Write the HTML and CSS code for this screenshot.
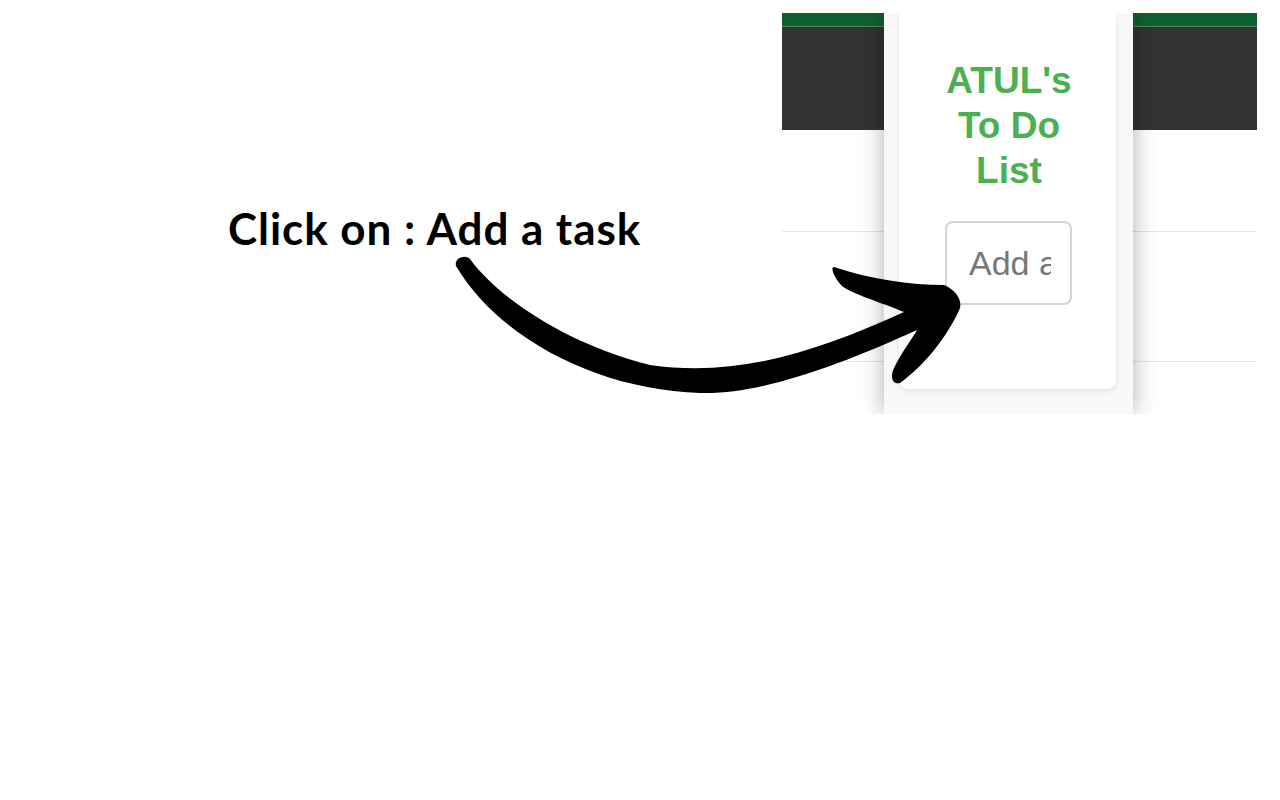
FILE: index.html
```html
<!DOCTYPE html>
<html lang="en">
<head>
<meta charset="utf-8">
<title>Click on : Add a task</title>
<link rel="stylesheet" href="styles.css">
</head>
<body>
<div class="page">
  <div class="left">
    <h1 class="caption">Click on : Add a task</h1>
  </div>
  <div class="shot">
    <div class="side side-left">
      <div class="green"></div>
      <div class="dark"></div>
      <div class="row r1"></div>
      <div class="row r2"></div>
      <div class="row r3"></div>
    </div>
    <div class="panel">
      <div class="card">
        <h2 class="title">ATUL's To Do List</h2>
        <div class="input"><span class="placeholder">Add a task</span></div>
      </div>
    </div>
    <div class="side side-right">
      <div class="green"></div>
      <div class="dark"></div>
      <div class="row r1"></div>
      <div class="row r2"></div>
      <div class="row r3"></div>
    </div>
  </div>
</div>
<svg class="arrow" viewBox="0 0 1280 800" width="1280" height="800" aria-hidden="true">
  <path d="M 456 266
    C 454 258, 465 254, 470 259
    C 500 300, 570 345, 650 365
    C 740 378, 820 350, 904 312
    C 880 302, 852 294, 842 286
    C 834 278, 830 267, 834 267
    C 870 279, 910 285, 944 285
    C 956 290, 962 300, 960 308
    C 953 325, 932 360, 900 383
    C 892 385, 890 376, 894 368
    C 902 352, 910 342, 917 330
    C 840 365, 760 395, 700 393
    C 600 390, 500 340, 456 266 Z" fill="#000"/>
</svg>
</body>
</html>
```
FILE: styles.css
```css
html, body {
  margin: 0;
  padding: 0;
  background: #ffffff;
}
.page {
  display: flex;
  padding-top: 13px;
  width: 1280px;
  height: 787px;
}
.left {
  width: 782px;
  flex: none;
}
.caption {
  margin: 0;
  padding: 188px 0 0 228px;
  font-family: Lato, "Open Sans", sans-serif;
  font-weight: 700;
  font-size: 44px;
  line-height: 54px;
  letter-spacing: 0.95px;
  color: #000;
  white-space: nowrap;
}
.shot {
  width: 475px;
  height: 401px;
  flex: none;
  display: flex;
  overflow: hidden;
}
.side {
  display: flex;
  flex-direction: column;
  background: #fff;
}
.side-left { width: 102px; }
.side-right { width: 124px; }
.green {
  height: 13px;
  background: #115f2e;
  border-bottom: 1px solid #4d8a5f;
}
.dark {
  height: 103px;
  background: #333333;
}
.row { border-bottom: 1px solid #e6e6e6; }
.r1 { height: 101px; }
.r2 { height: 129px; }
.r3 { flex: 1; border-bottom: none; }
.panel {
  width: 249px;
  flex: none;
  background: #f8f8f8;
  position: relative;
  z-index: 1;
  box-shadow: 0 0 22px rgba(0, 0, 0, 0.32);
  padding: 0 17px 25px 15px;
  box-sizing: border-box;
  display: flex;
}
.card {
  flex: 1;
  background: #fff;
  border-radius: 0 0 9px 9px;
  box-shadow: 0 2px 6px rgba(0, 0, 0, 0.08);
  display: flex;
  flex-direction: column;
  align-items: center;
  padding-top: 45px;
}
.title {
  margin: 0 0 0 3px;
  font-family: "Liberation Sans", Arial, sans-serif;
  font-weight: 700;
  font-size: 37px;
  line-height: 45px;
  color: #4caf50;
  text-align: center;
  width: 160px;
}
.input {
  margin-top: 28px;
  margin-left: 2px;
  width: 127px;
  height: 84px;
  box-sizing: border-box;
  border: 2px solid #d4d4d4;
  border-radius: 8px;
  background: #fff;
  overflow: hidden;
  display: flex;
  align-items: center;
  padding-left: 22px;
}
.placeholder {
  font-family: "Liberation Sans", Arial, sans-serif;
  font-size: 34px;
  color: #777777;
  white-space: nowrap;
  overflow: hidden;
  width: 82px;
  flex: none;
}
.arrow {
  position: absolute;
  left: 0;
  top: 0;
  z-index: 5;
  pointer-events: none;
}
```
